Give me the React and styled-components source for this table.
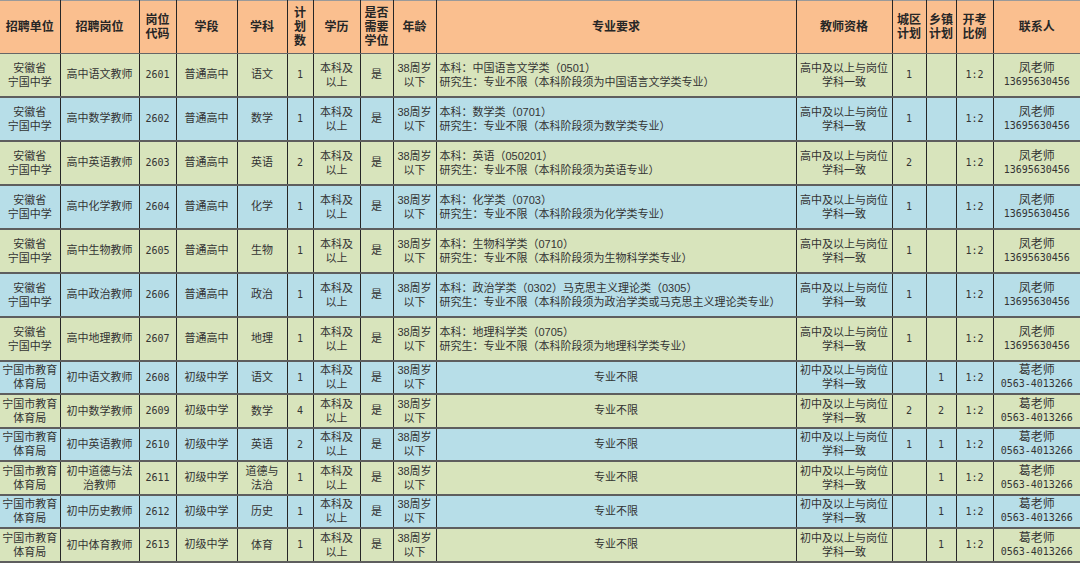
import React from "react";
import styled, { createGlobalStyle } from "styled-components";

const Global = createGlobalStyle`
  html, body { margin: 0; padding: 0; background: #ffffff; }
  body { font-family: "Liberation Sans", "Noto Sans CJK SC", sans-serif; }
`;

const COLORS = { head: "#FABF8F", green: "#D8E4BC", blue: "#B7DEE8" };
const WIDTHS = [60, 79, 37, 61, 50, 26, 47, 33, 43, 360, 96, 34, 30, 37, 87];

const Table = styled.table`
  border-collapse: collapse;
  table-layout: fixed;
  width: 1080px;
  color: #333333;
  font-size: 11px;
`;

const HeadRow = styled.tr`
  height: 53px;
  background: ${COLORS.head};
`;

const BodyRow = styled.tr`
  height: ${(p) => p.$h}px;
  background: ${(p) => (p.$tone === "blue" ? COLORS.blue : COLORS.green)};
`;

const Th = styled.th`
  padding: 0;
  font-weight: bold;
  font-size: 12px;
  line-height: 14px;
  text-align: center;
  vertical-align: middle;
  border-right: 1px solid #262626;
  border-bottom: 1px solid #666;
  border-top: 1px solid #9a9a9a;
  color: #262626;
  &:last-child { border-right: none; }
`;

const Td = styled.td`
  padding: ${(p) => (p.$left ? "0 0 0 3px" : "0")};
  line-height: 13px;
  text-align: ${(p) => (p.$left ? "left" : "center")};
  vertical-align: middle;
  border-right: 1px solid #262626;
  border-bottom: 2px solid #5e5e5e;
  white-space: nowrap;
  overflow: hidden;
  &:last-child { border-right: none; }
`;

const Line = styled.div`
  line-height: 14px;
  font-size: ${(p) => (p.$big ? "12px" : "inherit")};
`;

const Num = styled.span`
  font-family: "DejaVu Sans Mono", monospace;
  font-size: 10px;
`;

const NumLine = styled.div`
  font-family: "DejaVu Sans Mono", monospace;
  font-size: 10px;
  line-height: 14px;
`;

const Multi = ({ lines }) => (
  <>
    {lines.map((l, i) => (
      <Line key={i}>{l}</Line>
    ))}
  </>
);

const headers = [
  ["招聘单位"],
  ["招聘岗位"],
  ["岗位", "代码"],
  ["学段"],
  ["学科"],
  ["计", "划", "数"],
  ["学历"],
  ["是否", "需要", "学位"],
  ["年龄"],
  ["专业要求"],
  ["教师资格"],
  ["城区", "计划"],
  ["乡镇", "计划"],
  ["开考", "比例"],
  ["联系人"],
];

const high = [
  ["2601", "高中语文教师", "语文", "1", "中国语言文学类（0501）", "中国语言文学类", "1"],
  ["2602", "高中数学教师", "数学", "1", "数学类（0701）", "数学类", "1"],
  ["2603", "高中英语教师", "英语", "2", "英语（050201）", "英语", "2"],
  ["2604", "高中化学教师", "化学", "1", "化学类（0703）", "化学类", "1"],
  ["2605", "高中生物教师", "生物", "1", "生物科学类（0710）", "生物科学类", "1"],
  ["2606", "高中政治教师", "政治", "1", "政治学类（0302）马克思主义理论类（0305）", "政治学类或马克思主义理论类", "1"],
  ["2607", "高中地理教师", "地理", "1", "地理科学类（0705）", "地理科学类", "1"],
];

const middle = [
  ["2608", ["初中语文教师"], ["语文"], "1", "", "1"],
  ["2609", ["初中数学教师"], ["数学"], "4", "2", "2"],
  ["2610", ["初中英语教师"], ["英语"], "2", "1", "1"],
  ["2611", ["初中道德与法", "治教师"], ["道德与", "法治"], "1", "", "1"],
  ["2612", ["初中历史教师"], ["历史"], "1", "", "1"],
  ["2613", ["初中体育教师"], ["体育"], "1", "", "1"],
];

export default function App() {
  let idx = 0;
  const tone = () => (idx++ % 2 === 0 ? "green" : "blue");
  return (
    <>
      <Global />
      <Table>
        <colgroup>
          {WIDTHS.map((w, i) => (
            <col key={i} style={{ width: w }} />
          ))}
        </colgroup>
        <thead>
          <HeadRow>
            {headers.map((h, i) => (
              <Th key={i}>
                <Multi lines={h} />
              </Th>
            ))}
          </HeadRow>
        </thead>
        <tbody>
          {high.map((r, i) => (
            <BodyRow key={r[0]} $h={i === 0 ? 43 : 44} $tone={tone()}>
              <Td><Multi lines={["安徽省", "宁国中学"]} /></Td>
              <Td>{r[1]}</Td>
              <Td><Num>{r[0]}</Num></Td>
              <Td>普通高中</Td>
              <Td>{r[2]}</Td>
              <Td><Num>{r[3]}</Num></Td>
              <Td><Multi lines={["本科及", "以上"]} /></Td>
              <Td>是</Td>
              <Td><Multi lines={["38周岁", "以下"]} /></Td>
              <Td $left>
                <Line>本科：{r[4]}</Line>
                <Line>研究生：专业不限（本科阶段须为{r[5]}专业）</Line>
              </Td>
              <Td><Multi lines={["高中及以上与岗位", "学科一致"]} /></Td>
              <Td><Num>{r[6]}</Num></Td>
              <Td></Td>
              <Td><Num>1:2</Num></Td>
              <Td>
                <Line $big>凤老师</Line>
                <NumLine>13695630456</NumLine>
              </Td>
            </BodyRow>
          ))}
          {middle.map((r, i) => (
            <BodyRow key={r[0]} $h={i % 2 === 0 ? 33 : 34} $tone={tone()}>
              <Td><Multi lines={["宁国市教育", "体育局"]} /></Td>
              <Td><Multi lines={r[1]} /></Td>
              <Td><Num>{r[0]}</Num></Td>
              <Td>初级中学</Td>
              <Td><Multi lines={r[2]} /></Td>
              <Td><Num>{r[3]}</Num></Td>
              <Td><Multi lines={["本科及", "以上"]} /></Td>
              <Td>是</Td>
              <Td><Multi lines={["38周岁", "以下"]} /></Td>
              <Td>专业不限</Td>
              <Td><Multi lines={["初中及以上与岗位", "学科一致"]} /></Td>
              <Td><Num>{r[4]}</Num></Td>
              <Td><Num>{r[5]}</Num></Td>
              <Td><Num>1:2</Num></Td>
              <Td>
                <Line $big>葛老师</Line>
                <NumLine>0563-4013266</NumLine>
              </Td>
            </BodyRow>
          ))}
        </tbody>
      </Table>
    </>
  );
}
